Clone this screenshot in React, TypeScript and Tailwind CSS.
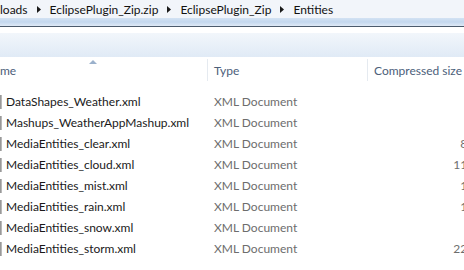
import React from "react";

const rows = [
  { name: "DataShapes_Weather.xml", size: "" },
  { name: "Mashups_WeatherAppMashup.xml", size: "" },
  { name: "MediaEntities_clear.xml", size: "8 KB" },
  { name: "MediaEntities_cloud.xml", size: "11 KB" },
  { name: "MediaEntities_mist.xml", size: "1 KB" },
  { name: "MediaEntities_rain.xml", size: "1 KB" },
  { name: "MediaEntities_snow.xml", size: "" },
  { name: "MediaEntities_storm.xml", size: "22 KB" },
];

function Arrow() {
  return (
    <svg width="4" height="7" viewBox="0 0 4 7" className="mx-[9px]">
      <path d="M0 0 L4 3.5 L0 7 Z" fill="#1a1a1a" />
    </svg>
  );
}

export default function App() {
  return (
    <div
      className="w-[464px] h-[270px] overflow-hidden bg-white text-[12px]"
      style={{ fontFamily: 'Lato, "Open Sans", sans-serif' }}
    >
      <div className="w-[540px]">
        {/* address bar */}
        <div className="h-[18px] bg-[#f2f5fa] flex items-center pt-[1px] text-[#111]">
          <span>loads</span>
          <Arrow />
          <span>EclipsePlugin_Zip.zip</span>
          <Arrow />
          <span>EclipsePlugin_Zip</span>
          <Arrow />
          <span>Entities</span>
        </div>
        <div className="h-[8px] bg-gradient-to-b from-[#d3e2f3] via-[#c3d7ee] to-[#dfe9f6]" />
        <div className="h-[1px] bg-[#4b5a6c]" />
        <div className="h-[6px] bg-white" />
        <div className="h-[24px] bg-gradient-to-b from-[#f2f6fb] to-[#e0eaf6]" />
        {/* header */}
        <div className="h-[25px] bg-white flex items-center text-[#4c607a] relative">
          <div className="w-[207px] relative h-full flex items-center pt-[3px]">
            <span>me</span>
            <svg width="8" height="4" viewBox="0 0 8 4" className="absolute left-[89px] top-[3px]">
              <path d="M0 4 L4 0 L8 4 Z" fill="#9bb1cc" />
            </svg>
          </div>
          <div className="w-[1px] h-[22px] bg-[#e5eaf0]" />
          <div className="w-[159px] pl-[6px] pt-[3px]">Type</div>
          <div className="w-[1px] h-[22px] bg-[#e5eaf0]" />
          <div className="pl-[6px] pt-[3px]">Compressed size</div>
        </div>
        <div className="h-[9px]" />
        {rows.map((r) => (
          <div key={r.name} className="h-[21px] flex items-center">
            <div className="w-[208px] flex items-center">
              <div className="w-[2px] h-[14px] bg-gradient-to-r from-[#8a8a8a] to-[#c8c8c8]" />
              <span className="ml-[4px] pt-[1px] text-[#1a1a1a]">{r.name}</span>
            </div>
            <div className="w-[160px] pl-[6px] pt-[1px] text-[#6d6d6d]">XML Document</div>
            <div className="w-[118px] text-right pt-[1px] text-[#6d6d6d]">{r.size}</div>
          </div>
        ))}
      </div>
    </div>
  );
}
